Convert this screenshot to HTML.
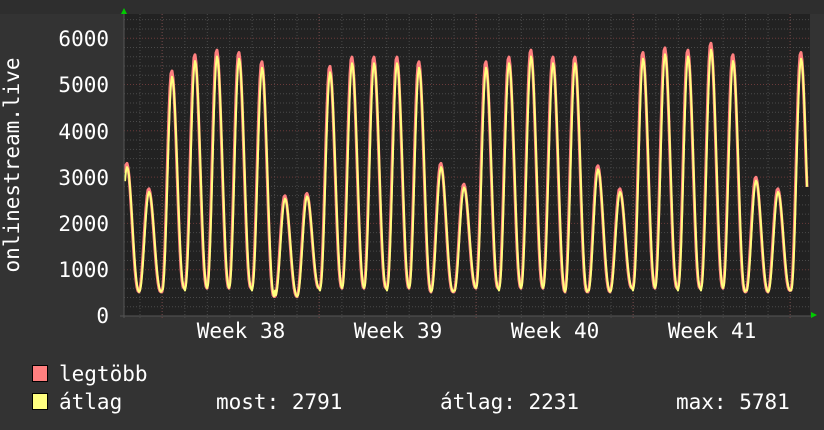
<!DOCTYPE html>
<html><head><meta charset="utf-8"><style>
body{margin:0;background:#333;width:824px;height:430px;overflow:hidden}
svg{display:block}
text{font-family:"DejaVu Sans Mono","Liberation Mono",monospace;fill:#fff;font-size:21px}
</style></head><body>
<svg id="s" width="824" height="430" xmlns="http://www.w3.org/2000/svg">
<rect x="0" y="0" width="824" height="14" fill="#2e2e2e"/>
<rect x="124" y="14" width="686" height="302" fill="#222"/>
<g id="grid"></g>
<path id="red" fill="none" stroke="#ff7f7f" stroke-width="3" stroke-linejoin="round"/>
<path id="yel" fill="none" stroke="#ffff7f" stroke-width="2" stroke-linejoin="round"/>
<line x1="124" y1="10" x2="124" y2="318" stroke="#555" stroke-width="1"/>
<line x1="120" y1="316" x2="812" y2="316" stroke="#555" stroke-width="1"/>
<polygon points="121,14 124,8 127,14" fill="#0c0"/>
<polygon points="811,312 817,315 811,318" fill="#0c0"/>
<g text-anchor="end">
<text x="109" y="46">6000</text><text x="109" y="92">5000</text><text x="109" y="139">4000</text>
<text x="109" y="185">3000</text><text x="109" y="231">2000</text><text x="109" y="277">1000</text><text x="109" y="323">0</text>
</g>
<text transform="translate(19,165) rotate(-90)" text-anchor="middle">onlinestream.live</text>
<g text-anchor="middle">
<text x="241" y="338">Week 38</text><text x="398" y="338">Week 39</text><text x="555" y="338">Week 40</text><text x="712" y="338">Week 41</text>
</g>
<rect x="32.5" y="365.5" width="15" height="16" fill="#ff7f7f" stroke="#000"/>
<rect x="32.5" y="393.5" width="15" height="16" fill="#ffff7f" stroke="#000"/>
<text x="59" y="381">legtöbb</text>
<text x="59" y="409">átlag</text>
<text x="216" y="409">most: 2791</text>
<text x="440" y="409">átlag: 2231</text>
<text x="676" y="409">max: 5781</text>
</svg>
<script>
var g=document.getElementById('grid'),h='';
function Y(v){return 316-v*0.0463;}
for(var v=200;v<=6400;v+=200){var y=Y(v);if(y<14)break;var maj=v%1000==0;
h+='<line x1="124" x2="810" y1="'+y+'" y2="'+y+'" stroke="'+(maj?'#6a3a3a':'#4a4a4a')+'" stroke-dasharray="1,2"/>';}
for(var x=140;x<810;x+=22.43){
h+='<line y1="14" y2="318" x1="'+x+'" x2="'+x+'" stroke="#4a4a4a" stroke-dasharray="1,2"/>';}
[162,319,476,633,790].forEach(function(m){h+='<line y1="14" y2="318" x1="'+m+'" x2="'+m+'" stroke="#6a3a3a" stroke-dasharray="1,2"/>';});
g.innerHTML=h;
var P=[[127,3300],[149,2750],[172,5300],[195,5650],[217,5750],[239,5700],[262,5500],[285,2600],[307,2650],[330,5400],[352,5600],[374,5600],[397,5600],[419,5500],[441,3300],[464,2850],[486,5500],[509,5600],[531,5750],[553,5600],[575,5600],[598,3250],[620,2750],[643,5700],[665,5800],[688,5750],[711,5900],[733,5650],[756,3000],[778,2750],[801,5700]];
var T=[550,520,520,600,600,600,600,420,420,600,600,600,600,600,520,520,600,600,600,600,520,520,520,600,600,600,600,600,520,520,550,550];
function val(x,s){
 for(var i=0;i<P.length;i++){
  var p=P[i][0],pk=P[i][1]*s;
  if(x<=p && x>=p-10){var t=(p-x)/10;var c=(1+Math.cos(Math.PI*t))/2;return T[i]+(pk-T[i])*Math.pow(c,1.1);}
  if(x>p && x<=p+12.4){var t=(x-p)/12.4;var c=(1+Math.cos(Math.PI*t))/2;c=Math.pow(c,1.25);return T[i+1]+(pk-T[i+1])*c;}
 }
 return T[0];}
function path(s,off){var d='';for(var x=125;x<=806;x+=1){var v=val(x-off,s);d+=(x==125?'M':'L')+x+','+Y(v).toFixed(1);}
d+='L807,'+Y(2791).toFixed(1);return d;}
document.getElementById('red').setAttribute('d',path(1,-0.3));
document.getElementById('yel').setAttribute('d',path(0.975,0.1));
</script>
</body></html>
